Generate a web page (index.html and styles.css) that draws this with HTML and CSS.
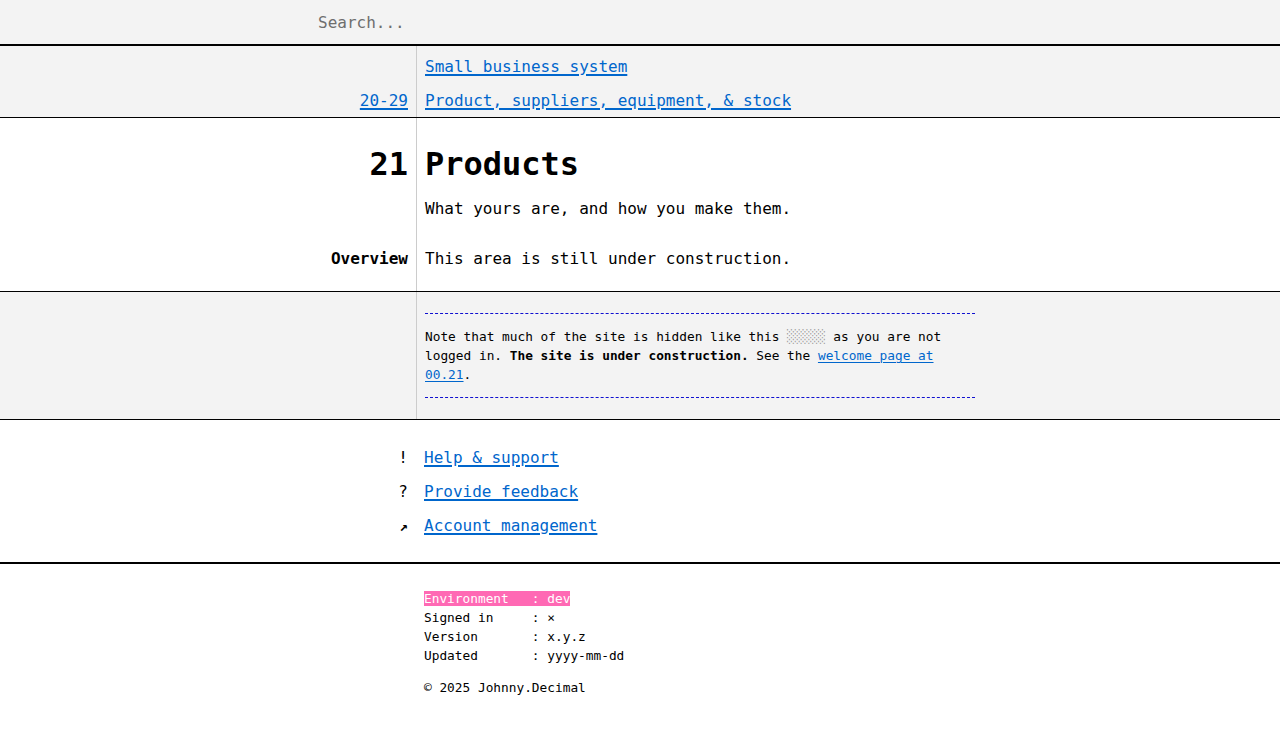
FILE: index.html
```html
<!DOCTYPE html>
<html lang="en">
<head>
<meta charset="utf-8">
<title>21 Products</title>
<link rel="stylesheet" href="styles.css">
</head>
<body>
<header class="top">
  <input class="search" type="text" placeholder="Search...">
</header>

<section class="split crumbs">
  <div class="l"></div>
  <div class="r"><a href="#">Small business system</a></div>
  <div class="l"><a href="#">20-29</a></div>
  <div class="r"><a href="#">Product, suppliers, equipment, &amp; stock</a></div>
</section>

<section class="split title">
  <div class="l num">21</div>
  <h1 class="r">Products</h1>
  <div class="l desc"></div>
  <p class="r desc">What yours are, and how you make them.</p>
  <div class="l ov label">Overview</div>
  <p class="r ov">This area is still under construction.</p>
</section>

<section class="split notice">
  <div class="l"></div>
  <div class="r">
    <div class="notebox">
      <p>Note that much of the site is hidden like this <span class="hidden">░░░░░</span> as you are not logged in. <strong>The site is under construction.</strong> See the <a href="#">welcome page at 00.21</a>.</p>
    </div>
  </div>
</section>

<section class="plain links">
  <div class="l icon">!</div>
  <div class="r"><a href="#">Help &amp; support</a></div>
  <div class="l icon">?</div>
  <div class="r"><a href="#">Provide feedback</a></div>
  <div class="l icon arrow">↗</div>
  <div class="r"><a href="#">Account management</a></div>
</section>

<footer class="plain foot">
  <div class="l"></div>
  <div class="r">
<pre class="meta"><span class="env">Environment   : dev</span>
Signed in     : ×
Version       : x.y.z
Updated       : yyyy-mm-dd</pre>
    <p class="copy">© 2025 Johnny.Decimal</p>
  </div>
</footer>
</body>
</html>
```

FILE: styles.css
```css
* { box-sizing: border-box; }

body {
  margin: 0;
  font-family: "DejaVu Sans Mono", "Liberation Mono", monospace;
  font-size: 16px;
  color: #000;
  background: #fff;
}

a {
  color: #0066cc;
  text-decoration: underline;
  text-decoration-thickness: 2px;
  text-underline-offset: 2px;
}

.top {
  height: 46px;
  background: #f3f3f3;
  border-bottom: 2px solid #000;
  display: flex;
  align-items: center;
  padding-left: 310px;
}

.search {
  border: 0;
  background: transparent;
  font: inherit;
  font-size: 16px;
  padding: 0 8px;
  width: 660px;
  outline: none;
  color: #000;
}
.search::placeholder { color: #6e6e6e; }

.split {
  display: grid;
  grid-template-columns: 417px 1fr;
  border-bottom: 1px solid #000;
  background: linear-gradient(#cccccc, #cccccc) no-repeat 416px 0 / 1px 100%;
}
.split .l { padding-right: 9px; text-align: right; }
.split .r { padding-left: 8px; }

.plain {
  display: grid;
  grid-template-columns: 416px 1fr;
}
.plain .l { padding-right: 8px; text-align: right; }
.plain .r { padding-left: 8px; }

.crumbs {
  padding-top: 4px;
  line-height: 33.5px;
  background: linear-gradient(#cccccc, #cccccc) no-repeat 416px 0 / 1px 100%, #f3f3f3;
}

.title {
  padding: 26px 0 20px;
}
.title h1, .title .num {
  margin: 0;
  font-size: 32px;
  line-height: 40px;
  font-weight: bold;
}
.title p { margin: 0; }
.title .desc { padding-top: 13px; line-height: 24px; }
.title .ov { padding-top: 26px; line-height: 24px; }
.title .label { font-weight: bold; }

.notice {
  padding: 21px 0;
  background: linear-gradient(#cccccc, #cccccc) no-repeat 416px 0 / 1px 100%, #f3f3f3;
  font-size: 12.8px;
  line-height: 19px;
}
.notebox {
  width: 550px;
  border-top: 1px dashed #1010d0;
  border-bottom: 1px dashed #1010d0;
}
.notebox p { margin: 12.8px 0 13.4px; }
.notebox a { text-decoration-thickness: 1px; }
.hidden { color: #9a9a9a; }

.links {
  padding: 21px 0 19px;
  line-height: 34px;
  border-bottom: 2px solid #000;
}
.icon { font-size: 16px; }
.arrow { font-size: 14px; font-weight: bold; }

.foot {
  padding-top: 25px;
  font-size: 12.8px;
  line-height: 19px;
}
.meta {
  margin: 0;
  font: inherit;
}
.env {
  background: #ff69b4;
  color: #fff;
}
.copy { margin: 13px 0 0; }
```
